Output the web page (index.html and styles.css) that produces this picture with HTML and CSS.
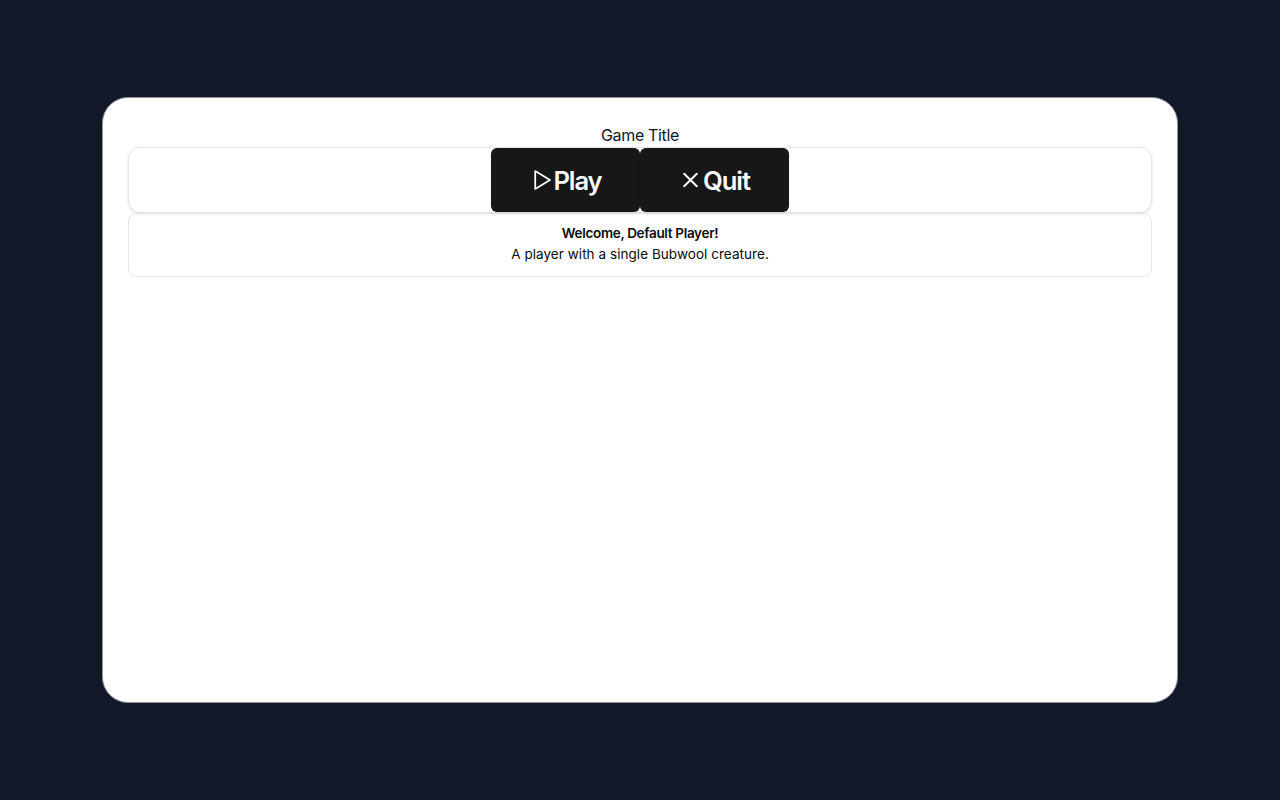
FILE: index.html
```html
<!DOCTYPE html>
<html lang="en">
<head>
<meta charset="utf-8">
<title>Game Title</title>
<link rel="stylesheet" href="styles.css">
</head>
<body>
<main class="screen">
  <h1 class="title">Game Title</h1>
  <div class="menu">
    <button class="button"><svg class="icon" viewBox="0 0 24 24"><path fill="none" stroke="currentColor" stroke-width="1.8" stroke-linejoin="round" d="M6.2 3.1v17.8L21 12Z"/></svg><span class="play">Play</span></button>
    <button class="button"><svg class="icon" viewBox="0 0 24 24"><path fill="none" stroke="currentColor" stroke-width="2" stroke-linecap="round" d="M5.2 5.7l12.6 12.6M17.8 5.7L5.2 18.3"/></svg><span class="quit">Quit</span></button>
  </div>
  <section class="alert">
    <h2 class="welcome">Welcome, Default Player!</h2>
    <p class="description">A player with a single Bubwool creature.</p>
  </section>
</main>
</body>
</html>
```
FILE: styles.css
```css
* { box-sizing: border-box; margin: 0; }
body {
  min-height: 100vh;
  display: flex;
  align-items: center;
  justify-content: center;
  background: #111827;
  font-family: Inter, sans-serif;
  color: #0a0a0a;
}
.screen {
  width: 1076px;
  height: 606px;
  padding: 25px;
  border: 1px solid #90959c;
  border-radius: 26px;
  background: #fff;
  text-align: center;
}
.title {
  font-size: 16px;
  font-weight: 400;
  line-height: 24px;
  letter-spacing: -0.35px;
  color: #111827;
}
.menu {
  display: flex;
  justify-content: center;
  border: 1px solid #e5e5e5;
  border-radius: 12px;
  box-shadow: 0 1px 3px rgba(0, 0, 0, .1), 0 1px 2px -1px rgba(0, 0, 0, .1);
}
.button {
  width: 149px;
  height: 64px;
  padding: 0;
  display: flex;
  align-items: center;
  justify-content: center;
  border: 0;
  border-radius: 6px;
  background: #171717;
  color: #fafafa;
  font: 600 25.6px/36px Inter, sans-serif;
  box-shadow: 0 1px 2px rgba(0, 0, 0, .08);
}
.icon { width: 24px; height: 24px; flex: none; }
.play, .quit { padding-top: 2px; }
.play { letter-spacing: -1.1px; }
.quit { letter-spacing: -1px; }
.alert {
  padding: 12px 16px;
  border: 1px solid #e5e5e5;
  border-radius: 8px;
  font-size: 14px;
}
.welcome {
  margin-bottom: 4px;
  font-size: 13.5px;
  font-weight: 600;
  line-height: 14px;
  letter-spacing: -.32px;
}
.description {
  font-size: 13.5px;
  line-height: 20px;
  letter-spacing: .05px;
}
```
